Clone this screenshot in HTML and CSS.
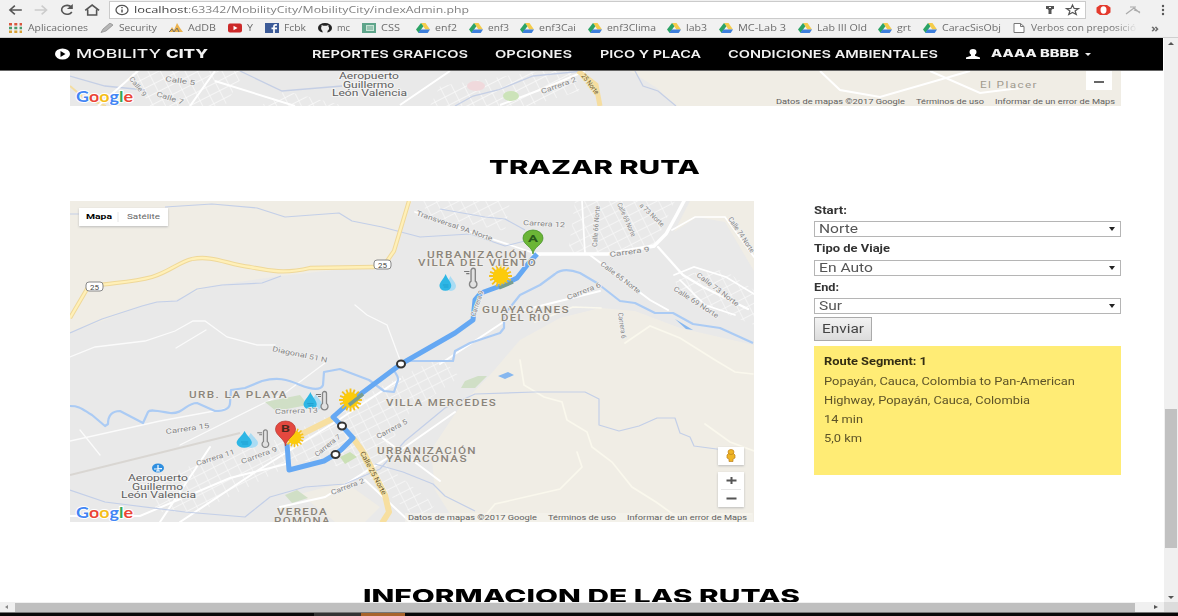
FILE: index.html
```html
<!DOCTYPE html>
<html lang="es">
<head>
<meta charset="utf-8">
<title>Mobility City</title>
<link rel="stylesheet" href="styles.css">
</head>
<body>
<svg width="0" height="0" class="defs">
  <defs>
    <symbol id="drive" viewBox="0 0 14 10"><path d="M5 0h4.500L14 6.500H9.400z" fill="#f5cc4b"/><path d="M5 0l2.400 3.300L2.600 10 0 6.600z" fill="#2ba365"/><path d="M4.500 6.500H14L11.700 10H2.300z" fill="#3d7edb"/></symbol>
    <symbol id="sun" viewBox="-12 -12 24 24"><g stroke="#f5c11b" stroke-width="1.800"><path d="M-11 0H11M0-11V11M-8-8L8 8M-8 8L8-8M-10-4L10 4M-10 4L10-4M-4-10L4 10M4-10L-4 10"/></g><circle r="7.500" fill="#fccb0b"/></symbol>
    <symbol id="drop" viewBox="0 0 18 18" preserveAspectRatio="none"><path d="M12 2c3 5 6 7 6 10a5.500 5 0 0 1-11 0c0-3 3-5 5-10z" fill="#a9dcf4"/><path d="M7 0c2 5 6 8 6 12a6.300 5.500 0 0 1-12.500 0C.5 8 5 5 7 0z" fill="#2db6e5"/><path d="M4 11h6M5 13h5" stroke="#1692c4" opacity=".6"/></symbol>
    <symbol id="thermo" viewBox="0 0 14 22"><path d="M7.500 13V3a2 2 0 0 1 4 0v10a3.500 3.500 0 1 1-4 0z" fill="#e2e2e2" stroke="#858585" stroke-width="1.300"/><path d="M1 4h5M3 6h3" stroke="#777"/></symbol>
    <g id="google"><text font-family="Lato" font-size="16" font-weight="700" textLength="57" lengthAdjust="spacingAndGlyphs" stroke="#fff" stroke-width="2" paint-order="stroke"><tspan fill="#4285f4">G</tspan><tspan fill="#ea4335">o</tspan><tspan fill="#f5bd18">o</tspan><tspan fill="#4285f4">g</tspan><tspan fill="#34a853">l</tspan><tspan fill="#ea4335">e</tspan></text></g>
    <pattern id="blocks" width="11" height="9" patternUnits="userSpaceOnUse" patternTransform="rotate(-27)"><path d="M0 0H11M0 0V9" stroke="#fff" stroke-width="1.300"/></pattern>
  </defs>
</svg>

<header class="chrome">
  <div class="toolbar">
    <svg class="nav-icons" viewBox="0 0 110 20" fill="none" stroke="#555" stroke-width="1.600">
      <path d="M22 10H10M15 5.500L10 10l5 4.500"/><path d="M35 10h12M42 5.500L47 10l-5 4.500" stroke="#ccc"/>
      <path d="M72 7a5.500 4.500 0 1 0 .5 5"/><path d="M73.500 4v5h-6z" fill="#555" stroke="none"/>
      <path d="M86 10.500l7-5.500 7 5.500M88.500 9.500V15h9V9.500"/>
    </svg>
    <div class="address">
      <svg class="info" viewBox="0 0 14 14" fill="none" stroke="#555"><ellipse cx="7" cy="7" rx="6" ry="4.600" stroke-width="1.300"/><path d="M7 6.500V9.500M7 4v1.300" stroke-width="1.500"/></svg>
      <span class="url"><span class="fit host" data-w="54">localhost</span><span class="fit" data-w="281">:63342/MobilityCity/MobilityCity/indexAdmin.php</span></span>
      <svg class="addr-icons" viewBox="0 0 42 16"><path d="M6 4h8v3h-1.500l-1 1v4h-3V8l-1-1H6z" fill="#555"/><path d="M9 5.500h2" stroke="#fff"/><path d="M32.500 3l1.600 3.400 4.400.2-3.400 2.300 1.200 3.600-3.800-2-3.800 2 1.200-3.600-3.400-2.300 4.400-.2z" fill="none" stroke="#555" stroke-width="1.200"/></svg>
    </div>
    <svg class="ext-icons" viewBox="0 0 92 20"><path d="M14 5h7l3.500 2.500v5L21 15h-7l-3.500-2.500v-5z" fill="#e43a2d"/><ellipse cx="17.500" cy="10" rx="3" ry="3.700" fill="#fff"/><path d="M40 14l8-6 6 5M44 7h6M48 10l6 2" fill="none" stroke="#aaa" stroke-width="1.200"/><g fill="#555"><circle cx="77" cy="6" r="1.200"/><circle cx="77" cy="10" r="1.200"/><circle cx="77" cy="14" r="1.200"/></g></svg>
  </div>
  <div class="bookmarks">
    <div class="group first">
      <a><svg viewBox="0 0 14 10"><g stroke-width="2.500" stroke-dasharray="3 2.300"><path d="M0 1.200h13" stroke="#d9573f"/><path d="M0 5h13" stroke="#4b9a6b"/><path d="M0 8.800h13" stroke="#d8a136"/></g></svg><span class="fit" data-w="60">Aplicaciones</span></a>
      <a><svg viewBox="0 0 14 10"><path d="M1 9.500L3 6l7-6 3 2-7 6z" fill="#b5b5b5" stroke="#888" stroke-width=".7"/></svg><span class="fit" data-w="38">Security</span></a>
      <a><svg viewBox="0 0 14 10"><path d="M0 9l3-5 2 3 3-7 3 5 3 4z" fill="#ecb34e"/><path d="M0 9l3-3 2 3 3-4 2 4" stroke="#72716b" fill="none"/></svg><span class="fit" data-w="28">AdDB</span></a>
      <a><svg viewBox="0 0 14 10"><rect y=".5" width="14" height="9" rx="2" fill="#cc2929"/><path d="M5.500 2.800v4.400L9.500 5z" fill="#fff"/></svg><span class="fit" data-w="6">Y</span></a>
      <a><svg viewBox="0 0 14 10"><path d="M0 0h14v10H0z" fill="#3d5b98"/><path d="M9 10V3.300c0-1.300 1-1.500 3-1.300M6.500 5.300H12" stroke="#fff" stroke-width="1.700" fill="none"/></svg><span class="fit" data-w="22">Fcbk</span></a>
      <a><svg viewBox="0 0 14 10"><ellipse cx="7" cy="5" rx="7" ry="5" fill="#222"/><path d="M4.500 10V8C2.500 6 3.200 4 3.600 3.500L3.500 2l2 .8h3l2-.8-.1 1.500C12 6 10.500 7 9.500 8v2z" fill="#eee"/></svg><span class="fit" data-w="13">mc</span></a>
      <a><svg viewBox="0 0 14 10"><path d="M0 0h14v10H0z" fill="#5fa58b"/><path d="M4 2h8v6H4z" fill="#c7e4d5"/><path d="M5 4h6M5 6h6" stroke="#6ba58f"/></svg><span class="fit" data-w="19">CSS</span></a>
    </div>
    <div class="group">
      <a><svg><use href="#drive"/></svg><span class="fit" data-w="22">enf2</span></a>
      <a><svg><use href="#drive"/></svg><span class="fit" data-w="21">enf3</span></a>
      <a><svg><use href="#drive"/></svg><span class="fit" data-w="37">enf3Cai</span></a>
      <a><svg><use href="#drive"/></svg><span class="fit" data-w="49">enf3Clima</span></a>
      <a><svg><use href="#drive"/></svg><span class="fit" data-w="21">lab3</span></a>
      <a><svg><use href="#drive"/></svg><span class="fit" data-w="48">MC-Lab 3</span></a>
      <a><svg><use href="#drive"/></svg><span class="fit" data-w="50">Lab III Old</span></a>
      <a><svg><use href="#drive"/></svg><span class="fit" data-w="14">grt</span></a>
      <a><svg><use href="#drive"/></svg><span class="fit" data-w="59">CaracSisObj</span></a>
      <a><svg viewBox="0 0 14 10"><path d="M2 .5h6.500L12 3.500v6H2zM8.500.5v3H12" fill="#fff" stroke="#777"/></svg><span class="fit fade" data-w="105">Verbos con preposició</span></a>
    </div>
    <span class="fit more" data-w="8">»</span>
  </div>
</header>

<div class="viewport">
<main class="page">
  <nav class="site-nav">
    <div class="brand">
      <svg viewBox="0 0 16 12"><ellipse cx="8" cy="6" rx="7.500" ry="5.500" fill="#fff"/><path d="M6 3v6l5-3z" fill="#000"/></svg>
      <span class="fit" data-w="85">MOBILITY</span><b class="fit" data-w="42">CITY</b>
    </div>
    <div class="links">
      <a class="fit" data-w="156">REPORTES GRAFICOS</a>
      <a class="fit" data-w="77">OPCIONES</a>
      <a class="fit" data-w="101">PICO Y PLACA</a>
      <a class="fit" data-w="210">CONDICIONES AMBIENTALES</a>
    </div>
    <div class="user">
      <svg class="person" viewBox="0 0 14 10"><ellipse cx="7" cy="3" rx="3.500" ry="3" fill="#fff"/><path d="M5 5h4v1.700L14 8.500V10H0V8.500l5-1.800z" fill="#fff"/></svg>
      <b class="fit" data-w="88">AAAA BBBB</b>
      <i class="caret"></i>
    </div>
  </nav>

  <div class="content">
    <svg class="top-map" viewBox="70 71 1051 34.500">
      <path d="M70 71h1051v35H70z" fill="#e9e9e9"/>
      <path d="M630 71h491v35H675l-18-18z" fill="#f0ede5"/>
      <path d="M130 71h115l-20 35H150zM260 106l25-15 60 15zM430 106l10-20 100-15h30l10 20-50 15z" fill="url(#blocks)" opacity=".8"/>
      <path d="M70 86l14 12 22 8" stroke="#f4dda0" stroke-width="2" fill="none"/>
      <path d="M70 76l35 10 40 4M240 71l42 20 60-5M455 106l18-10 25-6 35-14 50-5M635 71l8 15 15 5 18 15" fill="none" stroke="#c5cfe5" stroke-width="1.300"/>
      <path d="M98 106l40-35M190 106l25-35M215 81l80 25M400 105l50-34M500 105l45-17 40-17M820 71l20 19 40 7 90-26M930 71l50 22 40-5" fill="none" stroke="#fff" stroke-width="2"/>
      <path d="M578 71l18 14 4 21" fill="none" stroke="#f5dda0" stroke-width="5"/>
      <ellipse cx="476" cy="86" rx="9" ry="5" fill="#f0d9dc"/><ellipse cx="511" cy="96" rx="8" ry="5" fill="#cce3b9"/>
      <g class="street"><text transform="translate(129 79) rotate(52)" textLength="23">Calle 9</text><text transform="translate(165 81) rotate(8)" textLength="30">Calle 5</text><text transform="translate(156 96) rotate(18)" textLength="28">Calle 7</text><text transform="translate(542 94) rotate(-20)" textLength="37">Carrera 2</text><text class="yellow-road" transform="translate(581 76) rotate(52)" textLength="24">25 Norte</text></g>
      <g class="poi"><text x="339" y="79" textLength="60">Aeropuerto</text><text x="343" y="87.500" textLength="51">Guillermo</text><text x="332" y="95.500" textLength="75">León Valencia</text></g>
      <text class="district light" x="980" y="88" textLength="58">El Placer</text>
      <use href="#google" x="76" y="102"/>
      <g class="legal"><text x="776" y="104" textLength="129">Datos de mapas ©2017 Google</text><text x="916" y="104" textLength="68">Términos de uso</text><text x="995" y="104" textLength="120">Informar de un error de Maps</text></g>
      <path d="M1086 71h26v19h-26z" fill="#fff"/><path d="M1094 82h10" stroke="#666" stroke-width="2"/>
    </svg>

    <h2><span class="fit" data-w="211">TRAZAR RUTA</span></h2>

    <div class="planner">
      <svg class="map" viewBox="70 201 684 321">
        <path d="M70 201h684v321H70z" fill="#e9e9e9"/>
        <g fill="#f0ede5">
          <path d="M70 201h342l-22 63-110 12-70 10-35 14-25 3-80 30z"/>
          <path d="M754 345v177H455l-20-32-4-40 30-45 29-30 30-35 40-22 40-10 35 3 45 17z"/>
          <path d="M674 232l16-31h64v70l-29-49-28-5z"/><path d="M300 494l45-12 35 25-15 15h-30z"/>
        </g>
        <g fill="url(#blocks)" opacity=".7">
          <path d="M575 201h100l-22 47-20 6h-65zM674 275l50-5 30 20v35l-75-30zM420 201h90l-5 30-75-15z"/>
          <path d="M155 480l50-20 65-18 55-25 55-30 60-30 20 20-50 35-30 48 55 45-15 16-60-51-60-10-100 52h-45z"/>
        </g>
        <g fill="none" stroke="#fff" stroke-linecap="round">
          <path d="M533 254H608l46-8 12-12 10-18 8-15" stroke-width="3.500"/><path d="M658 247l25 28 20 12 45 22" stroke-width="2.300"/>
          <path d="M674 275l20-8 32 10 28 17M680 280l25 25 30 10M672 230l23-13h30l29 40M585 254l-3-53M415 212l50 18 75 25" stroke-width="1.700"/>
          <path d="M70 357l25-10 50-6 30-10 18-10h12l22 16 30 8h18M176 348l30-18M400 360l-13-35-20-10-12-10M70 441l90-20 65-12M80 430l20 25M180 445l80-40 25-12 40-30" stroke-width="1.300" stroke-opacity=".8"/>
          <path d="M70 516h70l90-38 60-15M160 522l50-75M180 522l80-53 80-50 60-40M280 507l45-10 80-50 50-35M365 480l45 42M380 436l60 45M440 364l80-53 80-20M590 255l60 45 18 10" stroke-width="2"/>
          <path d="M480 522l15-18 65-15 22-22-5-15M520 360l4 25 20 12 18 5 5 18 20 12 5 15 20 15 20 25 24 15 28 20 35-8h32M535 322l38-15 28 1M625 343l25-17 30 12 35 22M715 360l20 12 18 2M705 424l25 18 24 9" stroke="#faf8ed" stroke-width="1.700"/>
        </g>
        <path d="M265 402l35-7 8 10-32 6zM465 381l13-5h9l-12 12h-14zM285 495l12-5 11 8-16 5z" fill="#d0dfc6"/>
        <path d="M340 457l10-5 7 5-12 7z" fill="#cbe0b6"/>
        <path d="M70 475l170-42" stroke="#d9d6d2" stroke-width="2"/>
        <g fill="none" stroke="#c3cfe8" stroke-width="1.200" stroke-linejoin="round">
          <path d="M70 214h45M165 207l47-3 45 4 28 9 54-4 13 8 30 6 38 10 50-3 35 12 20-5"/>
          <path d="M70 333l32-14 40-13 15-4 20-1 20-12 25-4 40-2 19-7M70 490l35 12 80 10 60 5 25-20 35-10 40-3 35-15 25-28 40-33 30-14 60-2h50l14 7v26l20 6 20-5 18-8h18l5 15 10 4 4 9 45 6"/>
          <path d="M375 464l28 8 30 12 12 12 30 15M440 209l45 8 20 2 20 11"/>
        </g>
        <path d="M70 406c10 0 12 3 22 9l13 11 3-2c0-6 2-13 12-13l23 12 5-11c2-3 10-1 22 1 14 1 16-10 27-10l18 8c5 0 15-1 15-8l1-13 14-2 17-7c15-4 25-2 38 4 13 5 21 5 23 0l1-13 16-3 29 11 15 11 10 1 4-12c1-5-5-8-3-10l13-9h45l2-10 15-8 30-10 4-5v-13l16-20 20-10 15-11c6-5 14-5 25-1l17 10 23 18 15 2 20 10h18l20 11 27 4 33 15" fill="none" stroke="#abcbf4" stroke-width="2.200" stroke-linejoin="round"/>
        <path d="M498 376l10-4 6 3-9 4zM675 319l18 11-7-1z" fill="#86b7ef"/>
        <g fill="none" stroke-linejoin="round">
          <path d="M70 318l17-29c7-6 40-5 65-12 17-5 27-15 40-18 20-4 35 5 58 8 20 4 35 7 60 1l65-1M385 264l9-13 15-50" stroke="#efd899" stroke-width="4.300"/>
          <path d="M70 318l17-29c7-6 40-5 65-12 17-5 27-15 40-18 20-4 35 5 58 8 20 4 35 7 60 1l65-1M385 264l9-13 15-50" stroke="#fff0b8" stroke-width="2.300"/>
          <path d="M286 442l46-23M353 438l12 17 20 40 4 17-7 11" stroke="#f7dfa0" stroke-width="6"/>
        </g>
        <g class="shield"><rect x="86" y="282" width="17" height="9" rx="3"/><text x="90" y="289.500" textLength="9">25</text><rect x="374" y="260" width="17" height="9" rx="3"/><text x="378" y="267.500" textLength="9">25</text></g>

        <path d="M537 254l-9 10-11 14-14 7-22 8-6 7-2 20-18 13-54 31-51 38-17 15 9 9 11 12-12 12-7 5-10 6-35 9-2-26" fill="none" stroke="#65a8f3" stroke-width="5" stroke-linejoin="round"/>
        <use href="#sun" x="488" y="263" width="25" height="26"/><use href="#sun" x="338" y="387" width="25" height="26"/><use href="#sun" x="284" y="426" width="21" height="23"/>
        <path d="M513 282l-14 6M363 394l-14 11" stroke="#779d91" stroke-width="3.500"/>
        <use href="#drop" x="439" y="274" width="17" height="18"/><use href="#drop" x="303" y="392" width="19" height="19"/><use href="#drop" x="236" y="431" width="22" height="18"/>
        <use href="#thermo" x="463" y="267" width="15" height="24"/><use href="#thermo" x="315" y="390" width="14" height="23"/><use href="#thermo" x="256" y="429" width="14" height="21"/>

        <g class="street">
          <text transform="translate(416 215) rotate(19)" textLength="80">Transversal 9A Norte</text><text transform="translate(523 225) rotate(3)" textLength="42">Carrera 12</text>
          <text transform="translate(597 247) rotate(-86)" textLength="41">Calle 66 Norte</text><text transform="translate(617 204) rotate(66)" textLength="36">Calle 69 Norte</text><text transform="translate(639 206) rotate(43)" textLength="31">a 73 Norte</text>
          <text transform="translate(610 257) rotate(-8)" textLength="40">Carrera 9</text><text transform="translate(600 265) rotate(37)" textLength="48">Calle 65 Norte</text><text transform="translate(673 290) rotate(33)" textLength="52">Calle 69 Norte</text><text transform="translate(696 276) rotate(37)" textLength="51">Calle 73 Norte</text><text transform="translate(728 219) rotate(56)" textLength="41">Calle 74 Norte</text>
          <text transform="translate(568 300) rotate(-22)" textLength="36">Carrera 6</text><text transform="translate(618 313) rotate(82)" textLength="26">Carrera 6</text><text transform="translate(475 317) rotate(-71)" textLength="27">Carrera 9</text><text transform="translate(272 351) rotate(12)" textLength="56">Diagonal 51 N</text>
          <text transform="translate(166 434) rotate(-8)" textLength="44">Carrera 15</text><text transform="translate(275 414) rotate(-2)" textLength="43">Carrera 13</text><text transform="translate(197 466) rotate(-18)" textLength="40">Carrera 11</text><text transform="translate(242 464) rotate(-20)" textLength="38">Carrera 9</text><text transform="translate(317 457) rotate(-39)" textLength="31">Carrera 7</text><text transform="translate(378 439) rotate(-28)" textLength="34">Carrera 5</text><text transform="translate(332 495) rotate(-21)" textLength="35">Carrera 2</text><text class="yellow-road" transform="translate(360 453) rotate(62)" textLength="48">Calle 25 Norte</text>
        </g>
        <g class="district">
          <text x="427" y="258" textLength="101">URBANIZACIÓN</text><text x="418" y="266" textLength="119">VILLA DEL VIENTO</text><text x="482" y="313" textLength="88">GUAYACANES</text><text x="501" y="321" textLength="50">DEL RIO</text>
          <text x="189" y="398" textLength="99">URB. LA PLAYA</text><text x="386" y="406" textLength="111">VILLA MERCEDES</text><text x="377" y="454" textLength="100">URBANIZACIÓN</text><text x="386" y="462" textLength="82">YANACONAS</text><text x="277" y="515" textLength="51">VEREDA</text><text x="274" y="523.500" textLength="57">POMONA</text>
        </g>
        <ellipse cx="158" cy="468" rx="6" ry="4.500" fill="#2f8fe0"/><path d="M154 469l8-.3M158 465v6M156 471h4" stroke="#fff" stroke-width="1.200"/>
        <g class="poi"><text x="128" y="481" textLength="60">Aeropuerto</text><text x="132" y="489.500" textLength="51">Guillermo</text><text x="121" y="498" textLength="75">León Valencia</text></g>
        <g fill="#fff" stroke="#333" stroke-width="2"><ellipse cx="401" cy="364" rx="4" ry="3.400"/><ellipse cx="342" cy="426" rx="4" ry="3.400"/><ellipse cx="335.500" cy="454.500" rx="4" ry="3.400"/></g>
        <path d="M533 254c-1-8-10-9-10-16a10 8 0 0 1 20 0c0 7-9 8-10 16z" fill="#6bb536" stroke="#3d8c21" stroke-width=".7"/><path d="M285.500 446c-1-8-10-10-10-17a10 8 0 0 1 20 0c0 7-9 9-10 17z" fill="#e4483f" stroke="#b43c35" stroke-width=".7"/>
        <g class="pin"><text x="528" y="242" textLength="10">A</text><text x="281" y="432" textLength="9">B</text></g>

        <g class="control"><path d="M79 208h89v18H79zM718 447h26v18h-26zM718 472h26v35h-26z"/></g>
        <path d="M118 212v10M721 489.500h20" stroke="#e6e6e6"/>
        <g class="map-type"><text x="86" y="219" textLength="26" font-weight="700">Mapa</text><text x="127" y="219" textLength="33" fill="#666">Satélite</text></g>
        <path d="M726.500 480.500h10M731.500 477v7M726.500 498.500h10" stroke="#555" stroke-width="2"/>
        <g fill="#efb526" stroke="#bb801d" stroke-width=".7"><path d="M727 455l2-2h4l2 2v3l-2 1v2.500h-4V459l-2-1z"/><ellipse cx="731" cy="452" rx="3" ry="2.500"/></g>
        <path d="M405 513h348v9H405z" fill="#f5f3ed" opacity=".6"/>
        <use href="#google" x="76" y="518"/>
        <g class="legal"><text x="408" y="520" textLength="129">Datos de mapas ©2017 Google</text><text x="548" y="520" textLength="68">Términos de uso</text><text x="627" y="520" textLength="120">Informar de un error de Maps</text></g>
      </svg>

      <aside class="side">
        <label><span class="fit" data-w="33">Start:</span></label>
        <div class="select"><span class="fit" data-w="39">Norte</span><i></i></div>
        <label><span class="fit" data-w="76">Tipo de Viaje</span></label>
        <div class="select"><span class="fit" data-w="54">En Auto</span><i></i></div>
        <label><span class="fit" data-w="25">End:</span></label>
        <div class="select"><span class="fit" data-w="23">Sur</span><i></i></div>
        <button type="button"><span class="fit" data-w="42">Enviar</span></button>
        <div class="route">
          <b><span class="fit" data-w="103">Route Segment: 1</span></b>
          <p><span class="fit" data-w="251">Popayán, Cauca, Colombia to Pan-American</span></p>
          <p><span class="fit" data-w="206">Highway, Popayán, Cauca, Colombia</span></p>
          <p><span class="fit" data-w="39">14 min</span></p>
          <p><span class="fit" data-w="38">5,0 km</span></p>
        </div>
      </aside>
    </div>

    <h2 class="next"><span class="fit" data-w="437">INFORMACION DE LAS RUTAS</span></h2>
  </div>
</main>
<div class="v-scroll"><i class="up"></i><div class="thumb"></div><i class="down"></i></div>
</div>
<div class="h-scroll"><i class="left"></i><div class="thumb"></div><i class="right"></i><div class="corner"></div></div>
<footer class="taskbar"><i class="grey"></i><i class="orange"></i></footer>
<script src="fit.js"></script>
</body>
</html>
```

FILE: styles.css
```css
* { box-sizing: border-box; }
body { margin: 0; width: 1178px; height: 616px; overflow: hidden; background: #fff; font-family: Roboto, sans-serif; color: #333; display: flex; flex-direction: column; }
svg { display: block; flex: none; }
.defs { position: absolute; }
.fit { display: inline-block; white-space: nowrap; transform-origin: 0 50%; flex: none; }

.chrome { height: 38px; flex: none; background: #f1f1f1; border-bottom: 1px solid #cfcfcf; font-family: "Open Sans", sans-serif; color: #6c6c6c; }
.toolbar { height: 20px; display: flex; }
.nav-icons { width: 109px; height: 20px; }
.address { width: 977px; height: 18px; margin-top: 1px; background: #fff; border: 1px solid #cbcbcb; display: flex; align-items: center; padding: 0 3px 0 5px; }
.info { width: 14px; height: 14px; margin-right: 5px; }
.url { display: flex; flex: 1; font-size: 9.5px; line-height: 14px; color: #808080; }
.host { color: #444; }
.addr-icons { width: 42px; height: 16px; }
.ext-icons { width: 92px; height: 20px; }
.bookmarks { height: 16px; display: flex; padding-left: 9px; font-size: 8.5px; line-height: 16px; }
.group { display: flex; gap: 11.6px; }
.group.first { gap: 12px; margin-right: 16px; }
.bookmarks a { display: flex; align-items: center; gap: 5px; }
.bookmarks svg { width: 14px; height: 10px; }
.fade { background: linear-gradient(90deg, #6c6c6c 80%, #e8e8e8); background-clip: text; color: transparent; }
.more { margin-left: 15px; font-size: 11px; font-weight: 700; }

.viewport { height: 564px; flex: none; display: flex; }
.page { width: 1164px; overflow: hidden; }
.site-nav { width: 1163px; height: 33px; background: #000; border-bottom: 1px solid #666; display: flex; align-items: center; padding-left: 54px; color: #f2f2f2; font: 500 11px/16px Inter, sans-serif; }
.brand { width: 258px; display: flex; align-items: center; gap: 5px; font-size: 12px; }
.brand svg { width: 17px; height: 12px; }
.brand b { font-weight: 800; }
.links { display: flex; gap: 27.3px; font-weight: 600; }
.user { display: flex; align-items: center; margin-left: 28px; }
.user b { font-weight: 800; font-size: 10.5px; }
.person { width: 14px; height: 10px; margin-right: 11px; }
.caret { margin-left: 6px; border: 3.5px solid transparent; border-top: 3px solid #eee; border-bottom: 0; }

.content { padding-left: 70px; width: 1121px; }
.top-map { width: 1051px; height: 34.5px; }
h2 { margin: 0; height: 95.5px; padding: 50px 2px 0 0; text-align: center; color: #000; font: 800 19px/24px Inter, sans-serif; }
h2.next { height: 79px; padding: 63px 28px 0 0; }
.planner { display: flex; justify-content: space-between; height: 321px; }
.map { width: 684px; height: 321px; }
.side { width: 307px; font-size: 10px; }
.side label { display: block; height: 20px; padding-top: 3.5px; font-weight: 700; line-height: 12px; color: #333; }
.side .select { height: 16px; border: 1px solid #b5b5b5; display: flex; align-items: center; justify-content: space-between; padding: 0 5px 0 4px; margin-bottom: 2.6px; background: #fff; font-size: 12px; line-height: 14px; color: #555; }
.select i { border: 3.5px solid transparent; border-top: 4px solid #222; border-bottom: 0; }
button { width: 58px; height: 24px; padding: 0; border: 1px solid #aaa; background: linear-gradient(#f3f3f3, #dcdcdc); font: 12.5px/16px Roboto, sans-serif; color: #444; display: flex; align-items: center; justify-content: center; margin-bottom: 5px; }
.route { height: 129px; background: #ffec75; padding: 6.5px 10px; line-height: 19.3px; font-size: 10.5px; color: #5d5328; }
.route b, .route p { display: block; margin: 0; height: 19.3px; }
.route b { color: #332d13; }

.street text { font: 7px Roboto, sans-serif; fill: #858585; stroke: #f1f1f1; stroke-width: 1.5px; paint-order: stroke; }
.street .yellow-road { fill: #69572d; stroke: #f7e5ae; }
.district text, text.district { font: 500 8.5px Roboto, sans-serif; letter-spacing: 1px; fill: #8b857b; stroke: #f0eeea; stroke-width: 1.5px; paint-order: stroke; }
text.district.light { font-weight: 400; fill: #a09a8c; }
.poi text { font: 8.8px Roboto, sans-serif; fill: #5e5e5e; stroke: #f3f3f3; stroke-width: 2px; paint-order: stroke; }
.legal text { font: 6.5px Roboto, sans-serif; fill: #606060; }
.shield rect { fill: #fff; stroke: #888; }
.shield text { font: 7px Roboto, sans-serif; fill: #444; }
.pin text { font: 700 9px Roboto, sans-serif; fill: #4b281c; }
.pin text:first-child { fill: #28591b; }
.control { fill: #fff; filter: drop-shadow(0 1px 1px #bbb); }
.map-type text { font-size: 8px; }

.v-scroll { width: 14px; background: #f0f0f0; display: flex; flex-direction: column; align-items: center; padding: 4px 0 3px; }
.v-scroll .thumb { width: 12px; height: 139px; margin: 364px 0 auto; background: #c1c1c1; }
.v-scroll i { border: 3px solid transparent; }
.v-scroll .up { border-bottom-color: #555; border-top: 0; }
.v-scroll .down { border-top-color: #555; border-bottom: 0; }
.h-scroll { height: 10px; flex: none; background: #f0f0f0; display: flex; align-items: center; }
.h-scroll .thumb { width: 1120px; height: 9px; background: #bfbfbf; }
.h-scroll i { border: 2.5px solid transparent; }
.h-scroll .left { border-right: 3px solid #888; border-left: 0; margin: 0 7px 0 5px; }
.h-scroll .right { border-left: 4px solid #555; border-right: 0; margin: 0 auto 0 19px; }
.corner { width: 14px; height: 10px; background: #dcdcdc; }
.taskbar { height: 4px; background: #080808; border-top: 1px solid #777; display: flex; padding-left: 314px; }
.taskbar i { width: 47px; background: #333; }
.taskbar .orange { width: 44px; background: #a8642c; }
```

FILE: fit.js
```js
// Stretch each label horizontally to its designated width.
document.querySelectorAll('.fit').forEach(function (el) {
  var natural = el.getBoundingClientRect().width;
  var width = Number(el.dataset.w);
  el.style.transform = 'scaleX(' + width / natural + ')';
  el.style.marginRight = (width - natural) + 'px';
});
document.querySelectorAll('text[textLength]').forEach(function (el) {
  el.setAttribute('lengthAdjust', 'spacingAndGlyphs');
});
```
